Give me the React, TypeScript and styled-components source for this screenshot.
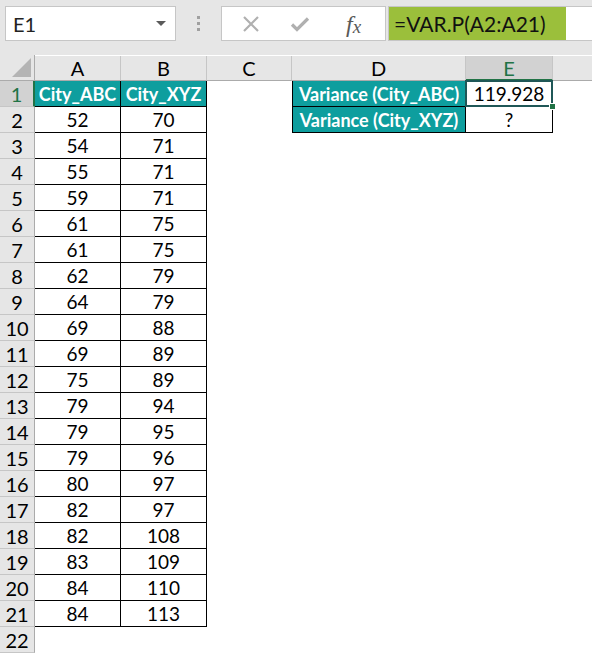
import React from 'react';
import styled, { createGlobalStyle, css } from 'styled-components';

const GlobalStyle = createGlobalStyle`
  html, body {
    margin: 0;
    padding: 0;
    background: #ffffff;
  }
  body {
    font-family: Lato, "Open Sans", "Liberation Sans", sans-serif;
    color: #000;
  }
`;

const cityAbc = [52, 54, 55, 59, 61, 61, 62, 64, 69, 69, 75, 79, 79, 79, 80, 82, 82, 83, 84, 84];
const cityXyz = [70, 71, 71, 71, 75, 75, 79, 79, 88, 89, 89, 94, 95, 96, 97, 97, 108, 109, 110, 113];
const columns = ['A', 'B', 'C', 'D', 'E'];

type Kind = 'head' | 'data' | 'blank' | 'sel';

interface CellSpec {
  kind: Kind;
  text?: string | number;
  left?: boolean;
}

const buildRow = (r: number): CellSpec[] => {
  if (r === 1) {
    return [
      { kind: 'head', text: 'City_ABC' },
      { kind: 'head', text: 'City_XYZ' },
      { kind: 'blank' },
      { kind: 'head', text: 'Variance (City_ABC)', left: true },
      { kind: 'sel', text: '119.928' },
      { kind: 'blank' },
    ];
  }
  if (r === 22) {
    return [{ kind: 'blank' }, { kind: 'blank' }, { kind: 'blank' }, { kind: 'blank' }, { kind: 'blank' }, { kind: 'blank' }];
  }
  const row: CellSpec[] = [
    { kind: 'data', text: cityAbc[r - 2] },
    { kind: 'data', text: cityXyz[r - 2] },
    { kind: 'blank' },
  ];
  if (r === 2) {
    row.push({ kind: 'head', text: 'Variance (City_XYZ)', left: true });
    row.push({ kind: 'data', text: '?' });
  } else {
    row.push({ kind: 'blank' }, { kind: 'blank' });
  }
  row.push({ kind: 'blank' });
  return row;
};

const rows = Array.from({ length: 22 }, (_, i) => i + 1);

export default function App() {
  return (
    <>
      <GlobalStyle />
      <Page>
        <FormulaBar>
          <NameBox>
            <span>E1</span>
            <Caret />
          </NameBox>
          <Dots>
            <i />
            <i />
            <i />
          </Dots>
          <FxBox>
            <Cancel width="18" height="18" viewBox="0 0 18 18">
              <path d="M2 2 L16 16 M16 2 L2 16" stroke="#b0b0b0" strokeWidth="2.2" fill="none" />
            </Cancel>
            <Enter width="20" height="16" viewBox="0 0 20 16">
              <path d="M2 8.5 L7 13.5 L18 2.5" stroke="#b0b0b0" strokeWidth="3.2" fill="none" />
            </Enter>
            <Fx>
              f<sub>x</sub>
            </Fx>
          </FxBox>
          <FormulaInput>
            <Highlight>=VAR.P(A2:A21)</Highlight>
          </FormulaInput>
        </FormulaBar>
        <Grid>
          <Corner>
            <Triangle />
          </Corner>
          {columns.map((c) => (
            <ColHead key={c} $active={c === 'E'}>
              {c}
            </ColHead>
          ))}
          <ColHead $last />
          {rows.map((r) => (
            <React.Fragment key={r}>
              <RowHead $active={r === 1}>{r}</RowHead>
              {buildRow(r).map((cell, i) => (
                <Cell key={i} $kind={cell.kind} $left={cell.left}>
                  {cell.text}
                </Cell>
              ))}
            </React.Fragment>
          ))}
        </Grid>
      </Page>
    </>
  );
}

const Page = styled.div`
  width: 592px;
  height: 653px;
  overflow: hidden;
  background: #ffffff;
`;

const FormulaBar = styled.div`
  height: 55px;
  box-sizing: border-box;
  padding: 6px 0 0 5px;
  background: #e6e6e6;
  display: flex;
  align-items: flex-start;
`;

const boxBase = css`
  height: 35px;
  box-sizing: border-box;
  background: #ffffff;
  border: 1px solid #c6c6c6;
`;

const NameBox = styled.div`
  ${boxBase};
  width: 171px;
  display: flex;
  align-items: center;
  justify-content: space-between;
  padding: 0 9px 0 7px;
  font-size: 20px;
  color: #222;
`;

const Caret = styled.span`
  width: 0;
  height: 0;
  border-left: 5px solid transparent;
  border-right: 5px solid transparent;
  border-top: 5px solid #5a5a5a;
`;

const Dots = styled.div`
  width: 45px;
  height: 35px;
  display: flex;
  flex-direction: column;
  align-items: center;
  justify-content: center;
  gap: 3px;
  i {
    width: 3px;
    height: 3px;
    background: #a0a0a0;
  }
`;

const FxBox = styled.div`
  ${boxBase};
  width: 165px;
  display: flex;
  align-items: center;
  padding-left: 20px;
`;

const Cancel = styled.svg`
  flex: none;
`;

const Enter = styled.svg`
  flex: none;
  margin-left: 30px;
`;

const Fx = styled.span`
  margin-left: 36px;
  font-family: "Liberation Serif", "DejaVu Serif", serif;
  font-style: italic;
  font-size: 24px;
  color: #595959;
  line-height: 1;
  sub {
    font-size: 19px;
    vertical-align: -1px;
  }
`;

const FormulaInput = styled.div`
  ${boxBase};
  margin-left: 2px;
  flex: 1;
  border-right: none;
  padding: 0;
  display: flex;
`;

const Highlight = styled.div`
  width: 177px;
  height: 100%;
  background: #9bbf3b;
  font-size: 21px;
  color: #111;
  display: flex;
  align-items: center;
  padding-left: 5px;
  box-sizing: border-box;
  white-space: nowrap;
`;

const Grid = styled.div`
  display: grid;
  grid-template-columns: 35px 86px 86px 85px 174px 87px 1fr;
  grid-auto-rows: 26px;
  font-size: 19px;
`;

const Corner = styled.div`
  background: #e6e6e6;
  border-right: 1px solid #ababab;
  border-bottom: 1px solid #ababab;
  box-sizing: border-box;
  position: relative;
`;

const Triangle = styled.div`
  position: absolute;
  right: 3px;
  bottom: 3px;
  width: 0;
  height: 0;
  border-left: 19px solid transparent;
  border-bottom: 19px solid #b4b4b4;
`;

const ColHead = styled.div<{ $active?: boolean; $last?: boolean }>`
  background: ${({ $active }) => ($active ? '#d2d2d2' : '#e6e6e6')};
  color: ${({ $active }) => ($active ? '#217346' : '#000')};
  border-right: ${({ $last }) => ($last ? 'none' : '1px solid #c6c6c6')};
  border-bottom: ${({ $active }) => ($active ? '2px solid #217346' : '1px solid #ababab')};
  box-sizing: border-box;
  display: flex;
  align-items: center;
  justify-content: center;
  font-size: 20px;
  margin-top: 1px;
`;

const RowHead = styled.div<{ $active?: boolean }>`
  background: ${({ $active }) => ($active ? '#d2d2d2' : '#e6e6e6')};
  color: ${({ $active }) => ($active ? '#217346' : '#000')};
  border-right: ${({ $active }) => ($active ? '2px solid #217346' : '1px solid #ababab')};
  border-bottom: 1px solid #c6c6c6;
  box-sizing: border-box;
  display: flex;
  align-items: center;
  justify-content: center;
  font-size: 20px;
`;

const Cell = styled.div<{ $kind: Kind; $left?: boolean }>`
  box-sizing: border-box;
  display: flex;
  align-items: center;
  justify-content: center;
  white-space: nowrap;
  position: relative;
  background: #ffffff;
  ${({ $kind }) =>
    $kind !== 'blank' &&
    css`
      border-right: 1px solid #000;
      border-bottom: 1px solid #000;
    `}
  ${({ $left }) => $left && 'border-left: 1px solid #000;'}
  ${({ $kind }) =>
    $kind === 'head' &&
    css`
      background: #0e9e9e;
      color: #ffffff;
      font-weight: 700;
      font-size: 18px;
    `}
  ${({ $kind }) =>
    $kind === 'sel' &&
    css`
      &::after {
        content: '';
        position: absolute;
        left: -1px;
        top: -1px;
        right: -1px;
        bottom: -1px;
        border: 2px solid #1f5757;
      }
      &::before {
        content: '';
        position: absolute;
        right: -4px;
        bottom: -4px;
        width: 5px;
        height: 5px;
        background: #217346;
        border: 1px solid #fff;
        z-index: 1;
      }
    `}
`;
